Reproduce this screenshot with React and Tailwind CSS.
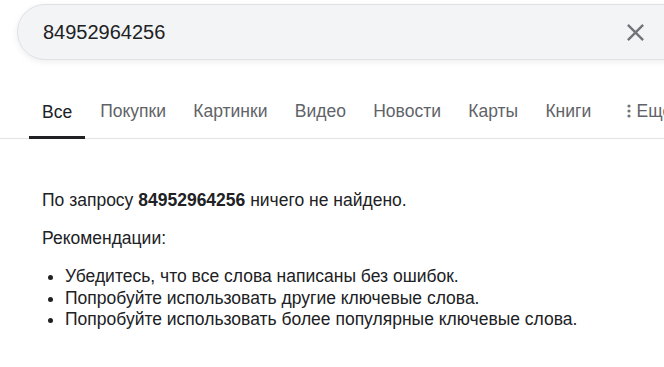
export default function App() {
  const tabs = ['Покупки', 'Картинки', 'Видео', 'Новости', 'Карты', 'Книги'];
  const tips = [
    'Убедитесь, что все слова написаны без ошибок.',
    'Попробуйте использовать другие ключевые слова.',
    'Попробуйте использовать более популярные ключевые слова.',
  ];

  return (
    <div className="w-[664px] h-[367px] overflow-hidden bg-white text-[#202124] font-[family-name:'Liberation_Sans',Arial,sans-serif]">
      {/* строка поиска */}
      <div className="pt-[4px] pl-[17px]">
        <div className="h-[56px] w-[700px] rounded-l-[28px] border border-[#dfe1e5] bg-[#f3f4f6] shadow-[0_2px_6px_rgba(32,33,36,0.08)] flex items-center">
          <span className="pl-[25px] text-[20px] leading-none text-[#202124]">84952964256</span>
          <svg className="ml-auto mr-[66px]" width="29" height="29" viewBox="0 0 24 24" fill="#70757a">
            <path d="M19 6.41L17.59 5 12 10.59 6.41 5 5 6.41 10.59 12 5 17.59 6.41 19 12 13.41 17.59 19 19 17.59 13.41 12z" />
          </svg>
        </div>
      </div>

      {/* вкладки */}
      <div className="mt-[41px] border-b border-[#e3e3e3] flex items-end pl-[29px] whitespace-nowrap">
        <div className="px-[13px] pb-[14px] border-b-[3px] border-[#202124] -mb-px text-[17.5px] leading-[20px] text-[#202124]">Все</div>
        <div className="flex gap-[27.3px] pl-[15px] pb-[17px] text-[17.5px] leading-[20px] text-[#5f6368]">
          {tabs.map(t => (
            <span key={t}>{t}</span>
          ))}
          <span className="flex items-center gap-[5px] ml-[9px]">
            <svg width="4" height="14" viewBox="0 0 4 14" fill="#70757a">
              <circle cx="2" cy="2" r="1.6" />
              <circle cx="2" cy="7" r="1.6" />
              <circle cx="2" cy="12" r="1.6" />
            </svg>
            Ещё
          </span>
        </div>
      </div>

      {/* результат */}
      <div className="pl-[42px] pt-[51px] text-[17.5px] leading-[21.5px]">
        <p>
          По запросу <b>84952964256</b> ничего не найдено.
        </p>
        <p className="mt-[16.5px]">Рекомендации:</p>
        <ul className="mt-[16.5px] list-disc pl-[23px]">
          {tips.map(t => (
            <li key={t}>{t}</li>
          ))}
        </ul>
      </div>
    </div>
  );
}
